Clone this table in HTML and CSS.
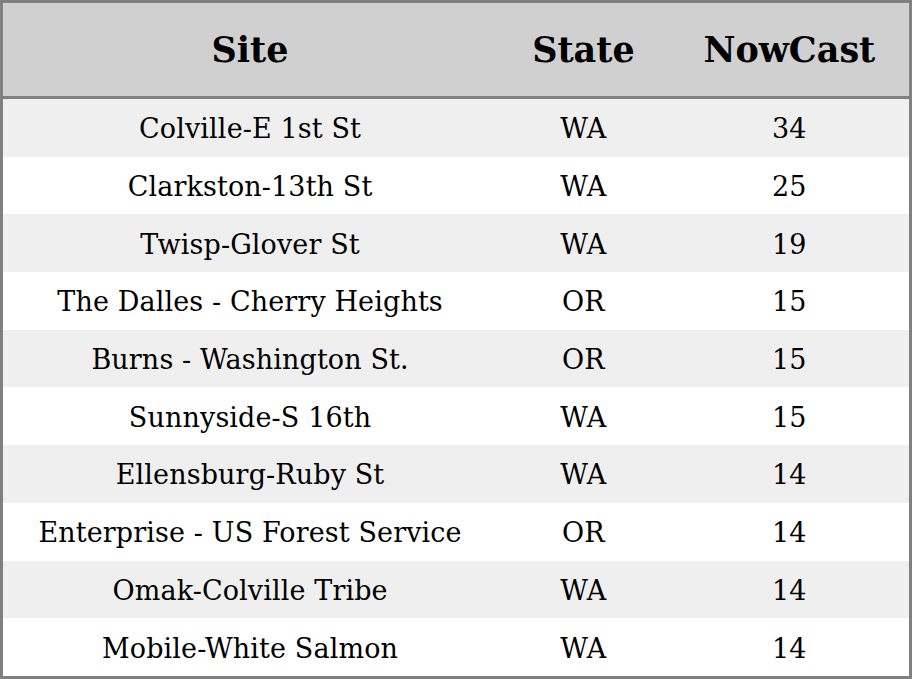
FILE: index.html
```html
<!DOCTYPE html>
<html>
<head>
<meta charset="utf-8">
<link rel="stylesheet" href="styles.css">
</head>
<body>
<table class="aq">
  <colgroup>
    <col class="c-site">
    <col class="c-state">
    <col class="c-now">
  </colgroup>
  <thead>
    <tr><th>Site</th><th>State</th><th>NowCast</th></tr>
  </thead>
  <tbody>
    <tr><td>Colville-E 1st St</td><td>WA</td><td>34</td></tr>
    <tr><td>Clarkston-13th St</td><td>WA</td><td>25</td></tr>
    <tr><td>Twisp-Glover St</td><td>WA</td><td>19</td></tr>
    <tr><td>The Dalles - Cherry Heights</td><td>OR</td><td>15</td></tr>
    <tr><td>Burns - Washington St.</td><td>OR</td><td>15</td></tr>
    <tr><td>Sunnyside-S 16th</td><td>WA</td><td>15</td></tr>
    <tr><td>Ellensburg-Ruby St</td><td>WA</td><td>14</td></tr>
    <tr><td>Enterprise - US Forest Service</td><td>OR</td><td>14</td></tr>
    <tr><td>Omak-Colville Tribe</td><td>WA</td><td>14</td></tr>
    <tr><td>Mobile-White Salmon</td><td>WA</td><td>14</td></tr>
  </tbody>
</table>
</body>
</html>
```
FILE: styles.css
```css
html, body {
  margin: 0;
  padding: 0;
  background: #ffffff;
}
.aq {
  width: 912px;
  height: 679px;
  border-collapse: collapse;
  border: 3px solid #808080;
  table-layout: fixed;
  font-family: "DejaVu Serif", serif;
  color: #000;
}
.c-site { width: 494px; }
.c-state { width: 172px; }
.c-now { width: 240px; }
.aq th {
  height: 93px;
  background: #d0d0d0;
  font-size: 35px;
  font-weight: bold;
  text-align: center;
  padding: 0;
  border-bottom: 3px solid #808080;
}
.aq td {
  font-size: 27px;
  letter-spacing: 0.12px;
  text-align: center;
  padding: 2px 0 0 0;
  height: 55.7px;
}
.aq tbody tr:nth-child(odd) td {
  background: #efefef;
}
```
